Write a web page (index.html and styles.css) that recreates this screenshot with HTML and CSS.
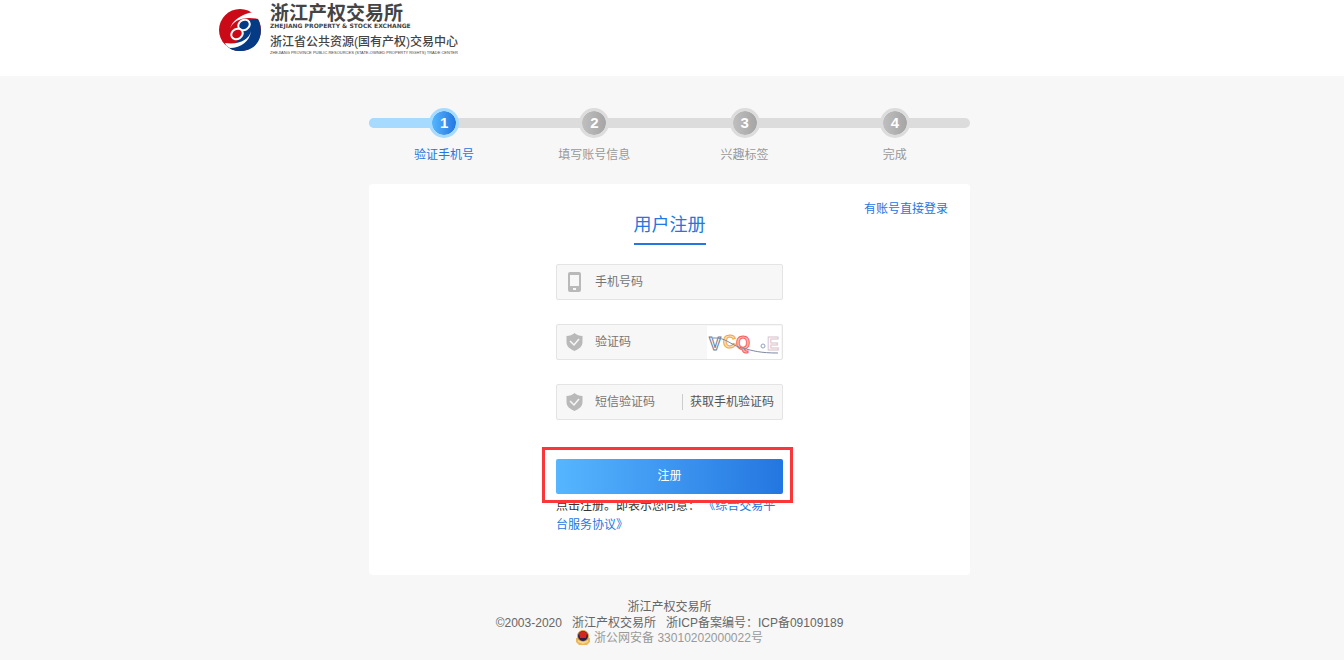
FILE: index.html
```
<!DOCTYPE html>
<html lang="zh-CN">
	<head>
		<meta charset="utf-8" />
		<meta name="viewport" content="width=device-width, initial-scale=1.0" />
		<title>用户注册</title>
		<link rel="stylesheet" href="styles.css">
	</head>
	<body>
		<!-- 头部 -->
		<header class="header">
			<div class="header-in">
				<svg class="logo" viewBox="0 0 42 44">
					<circle cx="21" cy="22" r="21" fill="#cb0a17" />
					<path d="M39 11c7 14 1 32-18 32-6 0-10-2-13-5 9-1 13-6 14-14 1-9 7-13 17-13z" fill="#053b85" />
					<path d="M11 21C14 12 25 8 39 11c-1-3-3-5-5-7C23 6 13 12 11 21z" fill="#fff" />
					<path d="M32 23c-2 9-12 14-26 12 1 3 3 4 5 5 11 0 20-7 21-17z" fill="#fff" />
					<ellipse cx="25" cy="17" rx="6" ry="5" transform="rotate(-30 25 17)" fill="#053b85" stroke="#fff" stroke-width="2" />
					<ellipse cx="18" cy="26" rx="6" ry="5" transform="rotate(-30 18 26)" fill="#cb0a17" stroke="#fff" stroke-width="2" />
				</svg>
				<div class="brand">
					<div class="brand-name">浙江产权交易所</div>
					<div class="brand-en">ZHEJIANG PROPERTY &amp; STOCK EXCHANGE</div>
					<div class="brand-sub">浙江省公共资源(国有产权)交易中心</div>
					<div class="brand-sub-en">ZHEJIANG PROVINCE PUBLIC RESOURCES (STATE-OWNED PROPERTY RIGHTS) TRADE CENTER</div>
				</div>
			</div>
		</header>
		<!-- 头部 end -->
		<main class="main">
			<!-- 步骤 -->
			<div class="progress">
				<div class="progress-on"></div>
			</div>
			<ol class="steps">
				<li class="active"><span class="num">1</span>验证手机号</li>
				<li><span class="num">2</span>填写账号信息</li>
				<li><span class="num">3</span>兴趣标签</li>
				<li><span class="num">4</span>完成</li>
			</ol>
			<!-- 步骤 end -->
			<!-- 注册 -->
			<div class="card">
				<a class="login" href="#">有账号直接登录</a>
				<h1 class="title">用户注册</h1>
				<form class="form">
					<div class="field">
						<svg class="icon" viewBox="0 0 18 20">
							<path d="M4 0h9a2 2 0 0 1 2 2v16a2 2 0 0 1-2 2H4a2 2 0 0 1-2-2V2a2 2 0 0 1 2-2zM4 3v11h9V3zM7 16v2h3v-2z" fill="#b9b9b9" fill-rule="evenodd" />
						</svg>
						<input type="text" placeholder="手机号码" aria-label="手机号码">
					</div>
					<div class="field">
						<svg class="icon" viewBox="0 0 18 20">
							<path d="M8.500 1c2 2 5 3 8 3v6c0 5-4 7-8 9-4-2-8-4-8-9V4c3 0 6-1 8-3z" fill="#b9b9b9" />
							<path d="M4 9l4 4 5-6" fill="none" stroke="#f7f7f7" stroke-width="1.500" />
						</svg>
						<input type="text" placeholder="验证码" aria-label="验证码">
						<svg class="captcha" viewBox="0 0 74 33">
							<text x="2" y="24" fill="#fff" stroke="#6f7b94">V</text>
							<text x="16" y="22" fill="#fde3c0" stroke="#f5a545">C</text>
							<text x="29" y="23" fill="#fbb" stroke="#f4625f">Q</text>
							<text x="60" y="24" fill="#fff" stroke="#dcc6ce">E</text>
							<circle cx="56" cy="20" r="2" fill="none" stroke="#8fa3bd" />
							<path d="M6 12C19 11 23 19 35 22s18 5 36 5" fill="none" stroke="#7d88a3" />
						</svg>
					</div>
					<div class="field">
						<svg class="icon" viewBox="0 0 18 20">
							<path d="M8.500 1c2 2 5 3 8 3v6c0 5-4 7-8 9-4-2-8-4-8-9V4c3 0 6-1 8-3z" fill="#b9b9b9" />
							<path d="M4 9l4 4 5-6" fill="none" stroke="#f7f7f7" stroke-width="1.500" />
						</svg>
						<input type="text" placeholder="短信验证码" aria-label="短信验证码">
						<button type="button" class="get-code">获取手机验证码</button>
					</div>
					<div class="submit">
						<button type="submit" class="reg">注册</button>
						<div class="mark"></div>
					</div>
					<p class="agree">点击注册。即表示您同意： <a href="#">《综合交易平台服务协议》</a></p>
				</form>
			</div>
			<!-- 注册 end -->
		</main>
		<!-- 底部 -->
		<footer class="footer">
			<div>浙江产权交易所</div>
			<div class="copy"><span>©2003-2020</span><span>浙江产权交易所</span><span>浙ICP备案编号：ICP备09109189</span></div>
			<a class="police" href="#">
				<svg viewBox="0 0 14 16">
					<path d="M0 8h14v4l-3 3H3l-3-3z" fill="#e9b65c" />
					<circle cx="7" cy="6" r="5.500" fill="#2b2148" stroke="#e2a84e" />
					<path d="M7 1l4 2-1 5H4L3 3z" fill="#d7261e" />
					<path d="M2 10l5 2 5-2v2l-5 2-5-2z" fill="#f5d78a" />
				</svg>
				浙公网安备 33010202000022号
			</a>
		</footer>
		<!-- 底部 end -->
	</body>
</html>
```
FILE: styles.css
```
*
{
	box-sizing: border-box;
}
body
{
	margin: 0;
	background: #f7f7f7;
	font: 12px/16px "Liberation Sans", "Noto Sans CJK SC", sans-serif;
	color: #666;
}
a
{
	color: #2476e0;
	text-decoration: none;
}
button
{
	border: 0;
	padding: 0;
	font: inherit;
	cursor: pointer;
}
/* 头部 */
.header
{
	background: #fff;
	height: 76px;
	padding-right: 5px;
}
.header-in
{
	max-width: 901px;
	margin: 0 auto;
	padding-top: 4px;
	display: flex;
	gap: 9px;
}
.logo
{
	width: 42px;
	height: 44px;
	margin-top: 4px;
}
.brand
{
	color: #444;
	white-space: nowrap;
}
.brand-name
{
	font-size: 19px;
	line-height: 20px;
	font-weight: bold;
}
.brand-en
{
	font-family: "DejaVu Sans", sans-serif;
	font-size: 6px;
	line-height: 4px;
	font-weight: bold;
}
.brand-sub
{
	font-size: 12px;
	line-height: 16px;
	margin-top: 6px;
	font-weight: 500;
}
.brand-sub-en
{
	font-size: 4px;
	line-height: 6px;
}
/* 步骤 */
.main,
.footer
{
	padding-right: 5px;
}
.progress,
.steps,
.card
{
	max-width: 601px;
	margin: 0 auto;
}
.main
{
	padding-top: 42px;
}
.progress
{
	height: 10px;
	border-radius: 5px;
	background: #dcdcdc;
	overflow: hidden;
}
.progress-on
{
	width: 12.5%;
	height: 10px;
	background: #a6dbff;
}
.steps
{
	list-style: none;
	padding: 0;
	margin-top: -20px;
	position: relative;
	display: grid;
	grid-template-columns: repeat(4, 1fr);
	text-align: center;
	color: #999;
}
.num
{
	display: block;
	width: 30px;
	height: 30px;
	margin: 0 auto 9px;
	border: 3px solid #dcdcdc;
	border-radius: 50%;
	background: linear-gradient(to right, #bfbfbf, #a5a5a5);
	background-clip: padding-box;
	color: #fff;
	font-size: 15px;
	line-height: 24px;
	font-weight: bold;
}
.steps .active
{
	color: #2476e0;
}
.active .num
{
	border-color: #a6dbff;
	background-image: linear-gradient(to right, #56b6ff, #2476e0);
}
/* 注册 */
.card
{
	position: relative;
	margin-top: 21px;
	padding: 27px 20px 40px;
	background: #fff;
	border-radius: 4px;
}
.login
{
	position: absolute;
	top: 17px;
	right: 22px;
}
.title
{
	width: max-content;
	margin: 0 auto 19px;
	padding-bottom: 4px;
	border-bottom: 2px solid #2476e0;
	color: #2476e0;
	font-size: 18px;
	line-height: 28px;
	font-weight: normal;
}
.form
{
	max-width: 227px;
	margin: 0 auto;
}
.field
{
	display: flex;
	align-items: center;
	height: 36px;
	margin-bottom: 24px;
	padding-left: 9px;
	border: 1px solid #e4e4e4;
	border-radius: 2px;
	background: #f7f7f7;
}
.icon
{
	flex: none;
	width: 18px;
	height: 20px;
	margin-right: 11px;
}
.field input
{
	flex: 1;
	min-width: 0;
	height: 32px;
	padding: 0;
	border: 0;
	outline: 0;
	background: none;
	font: inherit;
	color: #333;
}
.field input::placeholder
{
	color: #757575;
}
.captcha
{
	flex: none;
	width: 74px;
	height: 33px;
	margin-right: 1px;
	background: #fff;
	font-family: "Liberation Sans", sans-serif;
	font-size: 18px;
	font-weight: bold;
}
.get-code
{
	flex: none;
	padding: 0 8px 0 7px;
	border-left: 1px solid #ccc;
	background: none;
	color: #555;
}
.submit
{
	position: relative;
	padding: 15px 0 8px;
	background: #fff;
}
.reg
{
	display: block;
	width: 100%;
	height: 35px;
	padding-bottom: 2px;
	border-radius: 2px;
	background: linear-gradient(to right, #56b6ff, #2476e0);
	color: #fff;
}
/* 红框 */
.mark
{
	position: absolute;
	top: 3px;
	left: -14px;
	right: -10px;
	height: 56px;
	border: 3px solid #fa3638;
	pointer-events: none;
}
.agree
{
	margin: -5px 0 0;
	line-height: 19px;
	color: #333;
}
/* 底部 */
.footer
{
	padding-top: 24px;
	text-align: center;
}
.copy
{
	display: flex;
	justify-content: center;
	gap: 10px;
}
.police
{
	display: flex;
	justify-content: center;
	align-items: center;
	gap: 4px;
	line-height: 12px;
	height: 14px;
	color: #999;
}
.police svg
{
	width: 14px;
	height: 16px;
}
```
